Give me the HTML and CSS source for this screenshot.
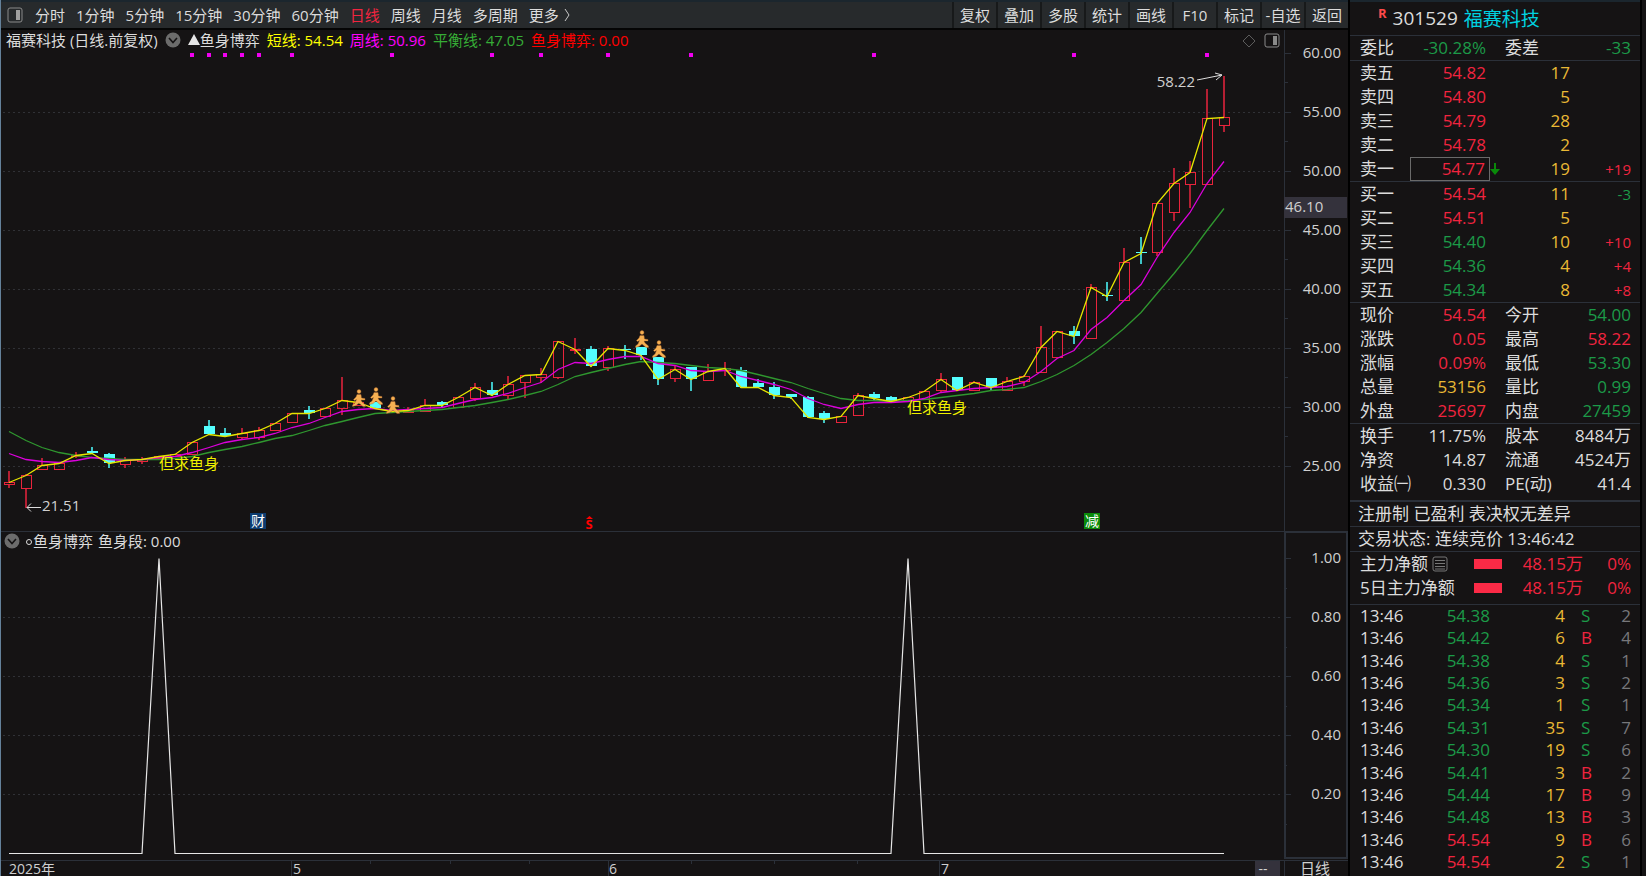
FILE: index.html
```html
<!DOCTYPE html>
<html lang="zh-CN">
<head>
    <meta charset="UTF-8">
    <meta name="viewport" content="width=device-width, initial-scale=1.0">
    <title>福赛科技 301529</title>
    <link rel="stylesheet" href="styles.css">
</head>
<body>
<div class="app">

    <!-- Charts -->
    <main class="charts">
        <nav class="toolbar">
            <button class="icon-btn" aria-label="侧栏">
                <svg width="16" height="16" viewBox="0 0 16 16"><rect x="1" y="1" width="14" height="14" rx="2" fill="none" stroke="#8a8a8a"/><rect x="9" y="3" width="4" height="10" fill="#a0a0a0"/></svg>
            </button>
            <div class="periods">
                <button>分时</button>
                <button>1分钟</button>
                <button>5分钟</button>
                <button>15分钟</button>
                <button>30分钟</button>
                <button>60分钟</button>
                <button class="active">日线</button>
                <button>周线</button>
                <button>月线</button>
                <button>多周期</button>
                <button class="more">更多
                    <svg width="8" height="14" viewBox="0 0 8 14"><path d="M2 1 L6 7 L2 13" fill="none" stroke="#c8c8c8"/></svg>
                </button>
            </div>
            <div class="tools">
                <button>复权</button>
                <button>叠加</button>
                <button>多股</button>
                <button>统计</button>
                <button>画线</button>
                <button>F10</button>
                <button>标记</button>
                <button>-自选</button>
                <button>返回</button>
            </div>
        </nav>

        <section class="panel">
            <svg class="plot" id="kline" viewBox="1 30 1347 501"></svg>
            <div class="legend">
                <span>福赛科技 (日线.前复权)</span>
                <button class="round" aria-label="展开">
                    <svg width="16" height="16" viewBox="0 0 16 16"><circle cx="8" cy="8" r="7.5" fill="#6c6c6c"/><path d="M4 6 L8 10.5 L12 6" fill="none" stroke="#151314" stroke-width="1.6"/></svg>
                </button>
                <span class="indicator"><svg width="12" height="12" viewBox="0 0 12 12"><path d="M6 0 L12 11 L0 11 Z" fill="#e6e6e6"/></svg>鱼身博弈</span>
                <span class="short">短线: 54.54</span>
                <span class="week">周线: 50.96</span>
                <span class="balance">平衡线: 47.05</span>
                <span class="signal">鱼身博弈: 0.00</span>
            </div>
            <div class="corner">
                <button aria-label="标记点">
                    <svg width="14" height="14" viewBox="0 0 14 14"><path d="M7 1 L13 7 L7 13 L1 7 Z" fill="none" stroke="#5c5c5c"/></svg>
                </button>
                <button aria-label="右侧栏">
                    <svg width="16" height="16" viewBox="0 0 16 16"><rect x="1" y="1" width="14" height="13" rx="2" fill="none" stroke="#8a8a8a"/><rect x="9" y="3" width="4" height="9" fill="#8a8a8a"/></svg>
                </button>
            </div>
        </section>

        <section class="panel">
            <svg class="plot" id="sub" viewBox="1 531 1347 328"></svg>
            <div class="legend legend-sub">
                <button class="round" aria-label="展开">
                    <svg width="16" height="16" viewBox="0 0 16 16"><circle cx="8" cy="8" r="7.5" fill="#6c6c6c"/><path d="M4 6 L8 10.5 L12 6" fill="none" stroke="#151314" stroke-width="1.6"/></svg>
                </button>
                <span class="indicator"><svg width="8" height="12" viewBox="0 0 8 12"><circle cx="4" cy="7" r="2.5" fill="none" stroke="#dcdcdc"/></svg>鱼身博弈</span>
                <span>鱼身段: 0.00</span>
            </div>
        </section>

        <svg class="plot" id="timeline" viewBox="1 859 1347 17"></svg>
    </main>

    <!-- Quote panel -->
    <aside class="quote">
        <h1 class="stock"><sup>R</sup><span>301529</span> <span class="name">福赛科技</span></h1>

        <table class="info">
            <tr><th>委比</th><td class="down">-30.28%</td><th>委差</th><td class="down">-33</td></tr>
        </table>

        <table class="book">
            <tr><th>卖五</th><td class="up">54.82</td><td class="vol">17</td><td></td></tr>
            <tr><th>卖四</th><td class="up">54.80</td><td class="vol">5</td><td></td></tr>
            <tr><th>卖三</th><td class="up">54.79</td><td class="vol">28</td><td></td></tr>
            <tr><th>卖二</th><td class="up">54.78</td><td class="vol">2</td><td></td></tr>
            <tr><th>卖一</th><td class="up last">54.77</td><td class="vol"><svg class="arrow" width="10" height="12" viewBox="0 0 10 12"><path d="M4 0 H6 V6 H10 L5 12 L0 6 H4 Z" fill="#0a8a0a"/></svg>19</td><td class="delta up">+19</td></tr>
        </table>

        <table class="book">
            <tr><th>买一</th><td class="up">54.54</td><td class="vol">11</td><td class="delta down">-3</td></tr>
            <tr><th>买二</th><td class="up">54.51</td><td class="vol">5</td><td></td></tr>
            <tr><th>买三</th><td class="down">54.40</td><td class="vol">10</td><td class="delta up">+10</td></tr>
            <tr><th>买四</th><td class="down">54.36</td><td class="vol">4</td><td class="delta up">+4</td></tr>
            <tr><th>买五</th><td class="down">54.34</td><td class="vol">8</td><td class="delta up">+8</td></tr>
        </table>

        <table class="info">
            <tr><th>现价</th><td class="up">54.54</td><th>今开</th><td class="down">54.00</td></tr>
            <tr><th>涨跌</th><td class="up">0.05</td><th>最高</th><td class="up">58.22</td></tr>
            <tr><th>涨幅</th><td class="up">0.09%</td><th>最低</th><td class="down">53.30</td></tr>
            <tr><th>总量</th><td class="vol">53156</td><th>量比</th><td class="down">0.99</td></tr>
            <tr><th>外盘</th><td class="up">25697</td><th>内盘</th><td class="down">27459</td></tr>
        </table>

        <div class="basics">
            <table class="info">
                <tr><th>换手</th><td>11.75%</td><th>股本</th><td>8484万</td></tr>
                <tr><th>净资</th><td>14.87</td><th>流通</th><td>4524万</td></tr>
                <tr><th>收益㈠</th><td>0.330</td><th>PE(动)</th><td>41.4</td></tr>
            </table>
        </div>

        <p class="note">注册制 已盈利 表决权无差异</p>
        <p class="note">交易状态: 连续竞价 13:46:42</p>

        <div class="flow">
            <table>
                <tr>
                    <th>主力净额<svg width="16" height="16" viewBox="0 0 16 16"><rect x="1" y="1" width="14" height="14" rx="2" fill="none" stroke="#777"/><path d="M3 4.5 H13 M3 7.5 H13 M3 10.5 H13 M3 13 H13" stroke="#777"/></svg></th>
                    <td><i class="bar"></i></td><td>48.15万</td><td>0%</td>
                </tr>
                <tr><th>5日主力净额</th><td><i class="bar"></i></td><td>48.15万</td><td>0%</td></tr>
            </table>
        </div>

        <div class="ticks">
            <table>
                <tr><td>13:46</td><td class="down">54.38</td><td class="vol">4</td><td class="down">S</td><td>2</td></tr>
                <tr><td>13:46</td><td class="down">54.42</td><td class="vol">6</td><td class="up">B</td><td>4</td></tr>
                <tr><td>13:46</td><td class="down">54.38</td><td class="vol">4</td><td class="down">S</td><td>1</td></tr>
                <tr><td>13:46</td><td class="down">54.36</td><td class="vol">3</td><td class="down">S</td><td>2</td></tr>
                <tr><td>13:46</td><td class="down">54.34</td><td class="vol">1</td><td class="down">S</td><td>1</td></tr>
                <tr><td>13:46</td><td class="down">54.31</td><td class="vol">35</td><td class="down">S</td><td>7</td></tr>
                <tr><td>13:46</td><td class="down">54.30</td><td class="vol">19</td><td class="down">S</td><td>6</td></tr>
                <tr><td>13:46</td><td class="down">54.41</td><td class="vol">3</td><td class="up">B</td><td>2</td></tr>
                <tr><td>13:46</td><td class="down">54.44</td><td class="vol">17</td><td class="up">B</td><td>9</td></tr>
                <tr><td>13:46</td><td class="down">54.48</td><td class="vol">13</td><td class="up">B</td><td>3</td></tr>
                <tr><td>13:46</td><td class="up">54.54</td><td class="vol">9</td><td class="up">B</td><td>6</td></tr>
                <tr><td>13:46</td><td class="up">54.54</td><td class="vol">2</td><td class="down">S</td><td>1</td></tr>
            </table>
        </div>
    </aside>
</div>

<script src="script.js"></script>
</body>
</html>
```
FILE: styles.css
```css
/* General */
* {
    box-sizing: border-box;
}
body {
    margin: 0;
    background-color: #151314;
    color: #dcdcdc;
    font-family: "Open Sans", "Noto Sans CJK SC", sans-serif;
    font-size: 15px;
}
button {
    font: inherit;
    color: inherit;
    background: none;
    border: none;
    padding: 0;
    cursor: pointer;
    white-space: nowrap;
}
svg {
    display: block;
}
.app {
    display: grid;
    grid-template-columns: minmax(0, 1fr) 298px;
    height: 100vh;
    overflow: hidden;
    border-left: 1px solid #64819a;
}

/* Toolbar */
.toolbar {
    display: flex;
    align-items: stretch;
    height: 30px;
    border-top: 2px solid #1b262e;
    border-bottom: 2px solid #050505;
    background-color: #272a2c;
    line-height: 24px;
}
.icon-btn {
    display: flex;
    align-items: center;
    padding: 0 12px 0 6px;
}
.periods {
    display: flex;
    flex: 1;
    gap: 11px;
}
.periods .active {
    color: #f22540;
}
.more {
    display: flex;
    align-items: center;
    gap: 4px;
}
.tools {
    display: flex;
}
.tools button {
    width: 44px;
    border-left: 2px solid #17191a;
}

/* Chart panels */
.panel {
    position: relative;
}
.plot {
    width: 100%;
    height: auto;
}
.legend {
    position: absolute;
    top: 0;
    left: 5px;
    display: flex;
    align-items: center;
    gap: 7px;
    line-height: 20px;
    white-space: nowrap;
}
.legend-sub {
    left: 3px;
    gap: 5px;
}
.indicator {
    display: flex;
    align-items: center;
}
.short { color: #ffff00; }
.week { color: #ff00ff; }
.balance { color: #36ac36; }
.signal { color: #ff0000; }
.corner {
    position: absolute;
    top: 3px;
    right: 68px;
    display: flex;
    align-items: center;
    gap: 8px;
}

/* Chart drawing */
.plot text {
    font-size: 15px;
    fill: #d0d0d0;
}
.plot .small {
    font-size: 14px;
}
.plot .tag {
    font-size: 14px;
    fill: #ffffff;
}
.plot .buy {
    fill: #f0f000;
}
.plot .dividend {
    font-size: 13px;
    font-weight: bold;
    fill: #ff0000;
}

/* Quote panel */
.quote {
    display: flex;
    flex-direction: column;
    min-height: 0;
    border-left: 2px solid #000;
    border-right: 2px solid #000;
    margin-right: 4px;
    font-size: 17px;
}
.stock {
    display: flex;
    align-items: center;
    gap: 6px;
    height: 36px;
    margin: 0;
    padding: 0 0 2px 28px;
    border-top: 2px solid #1b262e;
    border-bottom: 1px solid #2b3039;
    font-size: 19px;
    font-weight: normal;
}
.stock sup {
    align-self: flex-start;
    font-size: 13px;
    line-height: 22px;
    font-weight: bold;
    color: #ff4a4a;
}
.name {
    color: #00d2e0;
}
table {
    width: 100%;
    table-layout: fixed;
    border-collapse: collapse;
}
th, td {
    height: 24px;
    padding: 0 0 1px;
    line-height: 20px;
    font-weight: normal;
    text-align: right;
    white-space: nowrap;
}
th {
    text-align: left;
}
.up { color: #f0243f; }
.down { color: #1c9a48; }
.vol { color: #eab935; }

.book, .quote > .info {
    flex: none;
    border-bottom: 1px solid #2b3039;
    border-collapse: separate;
    border-spacing: 0;
}
.book th, .info th:first-child {
    width: 60px;
    padding-left: 10px;
}
.book td:nth-child(2), .info td:nth-child(2) {
    width: 80px;
    padding-right: 4px;
}
.book td:nth-child(3) {
    width: 80px;
}
.book td:last-child, .info td:last-child {
    padding-right: 9px;
}
.info th:nth-child(3) {
    width: 70px;
    padding-left: 15px;
}
.book .last {
    padding-right: 3px;
    border: 1px solid #6a6a6a;
}
.arrow {
    float: left;
    margin-top: 4px;
}
.delta {
    font-size: 15px;
}
.basics {
    padding-bottom: 4px;
    border-bottom: 2px solid #2b3039;
}
.note {
    margin: 0;
    padding: 0 0 1px 8px;
    line-height: 23px;
    border-bottom: 1px solid #2b3039;
    white-space: nowrap;
}

/* Money flow */
.flow {
    padding-bottom: 4px;
    border-bottom: 1px solid #2b3039;
}
.flow th {
    width: 124px;
    padding-left: 10px;
}
.flow th svg {
    display: inline-block;
    vertical-align: -2px;
    margin-left: 4px;
}
.flow td {
    color: #f0243f;
}
.flow td:nth-child(2) {
    width: 28px;
}
.flow td:nth-child(3) {
    width: 81px;
}
.flow td:last-child {
    padding-right: 9px;
}
.bar {
    display: block;
    height: 10px;
    background-color: #fb2a46;
}

/* Trade list */
.ticks {
    flex: 1;
    min-height: 0;
    padding-bottom: 2px;
}
.ticks table {
    height: 100%;
}
.ticks td {
    height: 22px;
}
.ticks td:first-child {
    width: 60px;
    padding-left: 10px;
    text-align: left;
}
.ticks td:nth-child(2) {
    width: 80px;
}
.ticks td:nth-child(3) {
    width: 75px;
}
.ticks td:nth-child(4) {
    width: 35px;
    padding-left: 16px;
    text-align: left;
}
.ticks td:last-child {
    padding-right: 9px;
    color: #77777b;
}
```
FILE: script.js
```javascript
const RED = '#e8243c';
const CYAN = '#54ffff';
const LINE = '#2b3039';

// [type, body top, body bottom, high, low], r = rising, c = falling
const candles = [
    ['r', 482, 484, 471, 487], ['r', 475, 488, 474, 507], ['r', 465, 469, 458, 469], ['r', 463, 469, 463, 469],
    ['r', 455, 456, 452, 457], ['c', 451, 453, 447, 453], ['c', 454, 463, 453, 467], ['r', 460, 464, 457, 467],
    ['r', 459, 461, 457, 463], ['r', 456, 458, 456, 458], ['r', 454, 456, 454, 456], ['r', 442, 454, 442, 454],
    ['c', 426, 434, 420, 434], ['c', 433, 436, 428, 436], ['r', 433, 437, 428, 439], ['r', 430, 437, 427, 439],
    ['r', 423, 430, 423, 430], ['r', 413, 422, 413, 422], ['c', 410, 413, 406, 418], ['r', 408, 416, 408, 416],
    ['r', 400, 408, 377, 414], ['r', 402, 405, 402, 405], ['c', 402, 408, 402, 408], ['r', 411, 412, 411, 412],
    ['r', 410, 412, 407, 412], ['r', 405, 411, 399, 411], ['c', 402, 405, 401, 407], ['r', 397, 407, 397, 407],
    ['r', 387, 398, 383, 400], ['c', 390, 395, 382, 395], ['r', 384, 395, 376, 398], ['r', 375, 382, 375, 397],
    ['r', 374, 377, 368, 382], ['r', 341, 377, 341, 378], ['r', 349, 350, 338, 353], ['c', 349, 366, 346, 366],
    ['r', 348, 367, 346, 370], ['c', 349, 350, 345, 358], ['c', 347, 355, 347, 359], ['c', 357, 379, 357, 384],
    ['r', 369, 378, 365, 381], ['c', 367, 379, 367, 390], ['r', 371, 380, 364, 380], ['r', 368, 370, 362, 375],
    ['c', 370, 387, 367, 387], ['c', 383, 387, 379, 387], ['c', 387, 395, 382, 398], ['c', 394, 397, 394, 398],
    ['c', 397, 417, 396, 417], ['c', 413, 419, 411, 422], ['r', 416, 422, 416, 422], ['r', 395, 415, 393, 415],
    ['c', 394, 398, 392, 400], ['c', 397, 401, 396, 401], ['r', 397, 400, 397, 400], ['r', 391, 399, 391, 399],
    ['r', 379, 390, 373, 392], ['c', 377, 390, 377, 390], ['r', 382, 390, 381, 390], ['c', 378, 387, 378, 389],
    ['r', 381, 390, 377, 390], ['r', 376, 381, 375, 385], ['r', 347, 372, 326, 372], ['r', 331, 357, 331, 357],
    ['c', 331, 336, 326, 343], ['r', 287, 338, 284, 338], ['c', 295, 296, 282, 300], ['r', 262, 300, 248, 300],
    ['c', 252, 253, 237, 263], ['r', 203, 252, 203, 255], ['r', 183, 212, 168, 220], ['r', 172, 184, 161, 207],
    ['r', 118, 184, 89, 184], ['r', 117, 125, 76, 131]
];

const week = [453, 459, 461, 462, 460, 457, 459, 460, 459, 457, 456, 452, 447, 442, 439, 437, 433, 427, 423, 417,
    411, 409, 408, 410, 409, 408, 407, 403, 399, 397, 393, 387, 382, 369, 362, 363, 359, 356, 356, 363,
    365, 370, 371, 370, 376, 380, 384, 389, 398, 404, 408, 404, 402, 402, 401, 398, 392, 390, 388, 387,
    386, 382, 371, 358, 350, 329, 317, 300, 284, 257, 232, 212, 183, 161];

const balance = [431, 440, 447, 452, 455, 457, 458, 459, 459, 459, 458, 456, 452, 449, 446, 442, 438, 435, 430, 425,
    421, 417, 413, 412, 411, 410, 409, 407, 405, 402, 399, 395, 391, 384, 376, 372, 368, 364, 361, 362,
    363, 365, 367, 368, 370, 374, 378, 382, 388, 393, 398, 400, 400, 401, 400, 399, 397, 395, 393, 390,
    389, 387, 381, 374, 365, 354, 342, 328, 312, 293, 273, 253, 230, 208];

const dots = [11, 12, 13, 14, 15, 17, 23, 29, 32, 36, 41, 52, 64, 72];
const runners = [[21, 389], [22, 387], [23, 396], [38, 330], [39, 340]];

const x = i => Math.round(9 + i * 16.64);

function line(x1, y1, x2, y2, color, extra = '') {
    return `<path d="M${x1} ${y1} L${x2} ${y2}" stroke="${color}" fill="none" ${extra}/>`;
}
function rect(left, top, w, h, fill) {
    return `<rect x="${left}" y="${top}" width="${w}" height="${h}" fill="${fill}"/>`;
}
function text(left, y, value, cls = '', anchor = 'start') {
    return `<text x="${left}" y="${y}" class="${cls}" text-anchor="${anchor}">${value}</text>`;
}
function curve(points, color) {
    const d = points.map((y, i) => `${x(i)},${y + 0.5}`).join(' ');
    return `<polyline points="${d}" fill="none" stroke="${color}" stroke-width="1.3"/>`;
}

// Horizontal dotted grid line
function grid(y) {
    return line(3, y + 0.5, 1281, y + 0.5, '#303136', 'stroke-dasharray="2 3"');
}

function candle(c, i) {
    const [type, top, bottom, high, low] = c;
    const cx = x(i);
    let out = '';
    if (type === 'c') {
        out += rect(cx - 1, high, 2, low - high + 1, '#3fc4c6');
        out += rect(cx - 5, top, 11, bottom - top, CYAN);
    } else {
        out += rect(cx - 1, high, 2, top - high, '#b41f33');
        out += rect(cx - 1, bottom, 2, low - bottom + 1, '#b41f33');
        out += `<rect x="${cx - 4.5}" y="${top + 0.5}" width="10" height="${bottom - top}" fill="none" stroke="${RED}"/>`;
    }
    return out;
}

function runner(i, y) {
    return `<g transform="translate(${x(i) - 6} ${y})" fill="#f6b052" stroke="#a8622a" stroke-width="0.4">
        <circle cx="7" cy="2.6" r="2"/>
        <path d="M5 5.5 H9 L9.5 9 L13 9.5 V11 H9 L10 13 L13.5 16 V17.5 H11 L7 14 L4 16.5 L0.5 17.5 V16 L3 14 L4.5 10.5 L2.5 11.5 L1.5 10.5 L4 8 Z"/>
    </g>`;
}

// Main chart
function drawKline() {
    let out = '';
    for (let p = 25; p <= 60; p += 5) {
        const y = Math.round(112 + (55 - p) * 11.8);
        if (p < 60) out += grid(y);
        out += rect(1285, y, 6, 1, LINE);
        if (p > 25) out += rect(1285, y + 29, 3, 1, LINE);
        out += text(1341, y + 5, p.toFixed(2), '', 'end');
    }
    out += rect(1284, 30, 1, 501, LINE);
    out += rect(1284, 197, 63, 21, '#34323c');
    out += text(1285, 212, '46.10');

    dots.forEach(i => out += rect(x(i) - 2, 53, 4, 4, '#f000f0'));
    candles.forEach((c, i) => out += candle(c, i));
    out += curve(balance, '#2f972f');
    out += curve(week, '#dc00dc');
    out += curve(candles.map(c => c[0] === 'r' ? c[1] : c[2]), '#e6e600');
    runners.forEach(r => out += runner(r[0], r[1]));

    out += text(159, 469, '但求鱼身', 'buy');
    out += text(907, 413, '但求鱼身', 'buy');

    // High and low marks
    out += '<path d="M41 507.5 H27 M31 503.5 L27 507.5 L31 511.5" fill="none" stroke="#dcdcdc"/>';
    out += text(42, 511, '21.51');
    out += '<path d="M1197 80 L1222 75 M1215 73 L1222 75 L1216 80" fill="none" stroke="#dcdcdc"/>';
    out += text(1195, 87, '58.22', '', 'end');

    // Event tags
    out += rect(250, 513, 16, 16, '#0c3c70') + text(258, 526, '财', 'tag', 'middle');
    out += rect(1084, 513, 16, 16, '#0a8a0a') + text(1092, 526, '减', 'tag', 'middle');
    out += '<path d="M586 519 L589.5 516 L593 519 Z" fill="#ff0000"/>';
    out += text(589, 529, 'S', 'dividend', 'middle');
    document.getElementById('kline').innerHTML = out;
}

// Indicator chart
function drawSub() {
    let out = rect(1, 531, 1284, 1, LINE);
    for (let n = 5; n >= 1; n--) {
        const y = 558 + (5 - n) * 59;
        if (n < 5) out += grid(y);
        out += rect(1285, y, 6, 1, LINE);
        out += rect(1285, y + 30, 2, 1, LINE);
        out += text(1341, y + 5, (n / 5).toFixed(2), '', 'end');
    }
    out += `<rect x="1285" y="532" width="62" height="326" fill="none" stroke="${LINE}" stroke-width="2"/>`;
    const pts = candles.map((c, i) => `${x(i)},${i === 9 || i === 54 ? 558.5 : 853.5}`).join(' ');
    out += `<polyline points="${pts}" fill="none" stroke="#e6e6e6" stroke-width="1.2"/>`;
    document.getElementById('sub').innerHTML = out;
}

function drawTimeline() {
    let out = rect(1, 860, 1347, 1, LINE);
    [291, 608, 939, 1284].forEach(p => out += rect(p, 861, 1, 15, LINE));
    [370, 450, 529, 691, 774, 857].forEach(p => out += rect(p, 861, 1, 3, LINE));
    out += text(9, 874, '2025年', 'small');
    out += text(293, 874, '5', 'small') + text(609, 874, '6', 'small') + text(941, 874, '7', 'small');
    out += rect(1255, 861, 25, 15, '#34323c') + text(1263, 874, '--', 'small', 'middle');
    out += text(1315, 874, '日线', '', 'middle');
    document.getElementById('timeline').innerHTML = out;
}

drawKline();
drawSub();
drawTimeline();
```
